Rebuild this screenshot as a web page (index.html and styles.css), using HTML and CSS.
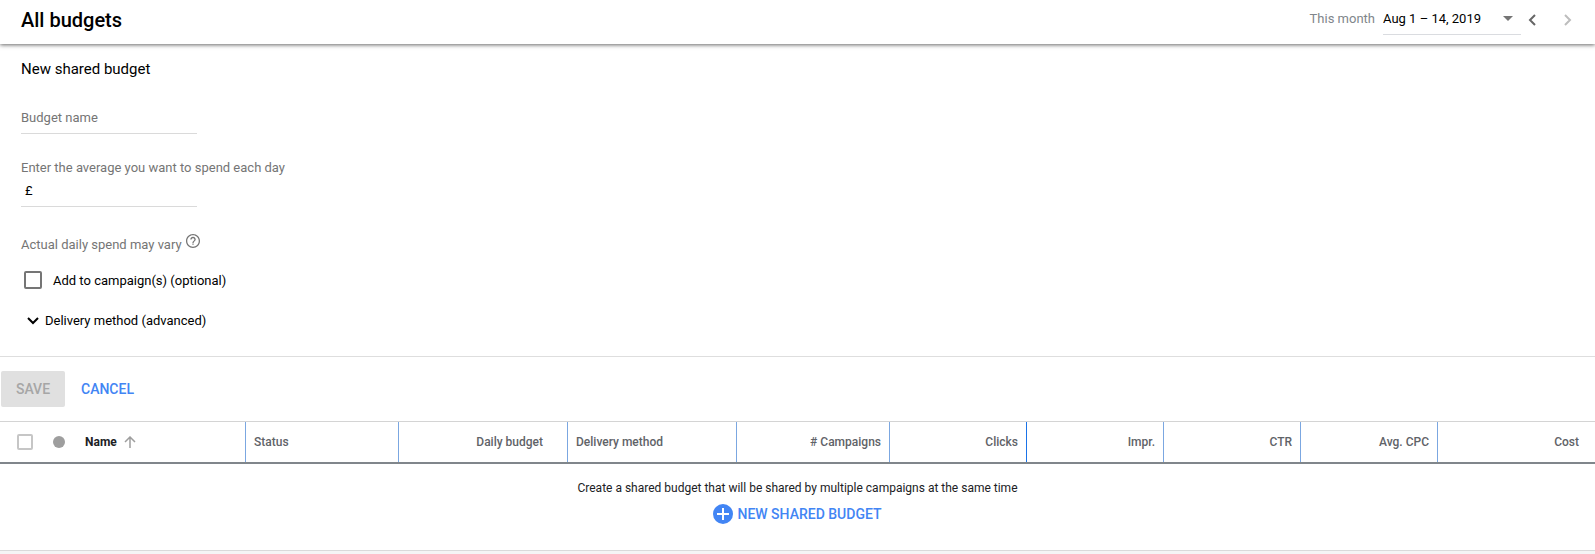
FILE: index.html
```
<!DOCTYPE html>
<html lang="en">
<head>
<meta charset="utf-8">
<meta name="viewport" content="width=device-width, initial-scale=1">
<title>All budgets</title>
<link rel="stylesheet" href="styles.css">
</head>
<body>
<header class="topbar">
  <h1 class="page-title">All budgets</h1>
  <div class="date-range">
    <label class="date-label" for="range">This month</label>
    <div class="select-wrap">
      <select class="date-select" id="range">
        <option>Aug 1 – 14, 2019</option>
      </select>
      <svg class="caret" width="10" height="5" viewBox="0 0 10 5" aria-hidden="true"><path d="M0 0h10L5 5z"/></svg>
    </div>
    <button class="step step-prev" type="button" aria-label="Previous period">
      <svg width="8" height="12" viewBox="0 0 8 12" aria-hidden="true"><path d="M7 1L2 6l5 5"/></svg>
    </button>
    <button class="step step-next" type="button" aria-label="Next period" disabled>
      <svg width="8" height="12" viewBox="0 0 8 12" aria-hidden="true"><path d="M1 1l5 5-5 5"/></svg>
    </button>
  </div>
</header>

<main>
  <form class="budget-form">
    <div class="form-body">
      <h2 class="form-title">New shared budget</h2>
      <input class="field name-field" type="text" placeholder="Budget name" aria-label="Budget name">
      <label class="field-label" for="amount">Enter the average you want to spend each day</label>
      <div class="field amount-field">
        <span>£</span>
        <input class="amount-input" id="amount" type="text" inputmode="decimal">
      </div>
      <div class="note">
        <span>Actual daily spend may vary</span>
        <svg class="help" width="14" height="14" viewBox="1 1 22 22" aria-hidden="true"><path d="M11 18h2v-2h-2v2zm1-17C5.900 1 1 5.900 1 12s4.900 11 11 11 11-4.900 11-11S18.100 1 12 1zm0 20c-5 0-9-4-9-9s4-9 9-9 9 4 9 9-4 9-9 9zm0-15.500c-2.400 0-4.300 1.900-4.300 4.300h2c0-1.300 1-2.300 2.300-2.300s2.300 1 2.300 2.300c0 2.200-3.300 2-3.300 5.200h2c0-2.300 3.300-2.500 3.300-5.200 0-2.400-1.900-4.300-4.300-4.300z"/></svg>
      </div>
      <label class="check-row">
        <input class="checkbox" type="checkbox">
        <span>Add to campaign(s) (optional)</span>
      </label>
      <button class="disclosure" type="button" aria-expanded="false">
        <svg width="12" height="8" viewBox="0 0 12 8" aria-hidden="true"><path d="M1 1l5 5 5-5"/></svg>
        <span>Delivery method (advanced)</span>
      </button>
    </div>
    <div class="actions">
      <button class="btn btn-save" type="submit" disabled>SAVE</button>
      <button class="btn btn-cancel" type="button">CANCEL</button>
    </div>
  </form>

  <table class="budgets">
    <colgroup>
      <col class="col-check"><col class="col-dot"><col class="col-name">
      <col class="col-medium"><col class="col-wide"><col class="col-wide"><col class="col-medium">
      <col class="col-metric"><col class="col-metric"><col class="col-metric"><col class="col-metric">
      <col class="col-cost">
    </colgroup>
    <thead>
      <tr>
        <th class="cell-check"><input class="checkbox checkbox-small" type="checkbox" aria-label="Select all budgets"></th>
        <th class="cell-dot"><span class="dot"></span></th>
        <th class="cell-name line">
          <span class="name-sort">Name
            <svg width="12" height="12" viewBox="0 0 12 12" aria-hidden="true"><path d="M6 12V1.500M1 6l5-5 5 5"/></svg>
          </span>
        </th>
        <th class="line">Status</th>
        <th class="num num-wide line">Daily budget</th>
        <th class="line">Delivery method</th>
        <th class="num line"># Campaigns</th>
        <th class="num line line-active">Clicks</th>
        <th class="num line">Impr.</th>
        <th class="num line">CTR</th>
        <th class="num line">Avg. CPC</th>
        <th class="num cell-cost">Cost</th>
      </tr>
    </thead>
    <tbody>
      <tr>
        <td class="empty" colspan="12">
          <p class="empty-text">Create a shared budget that will be shared by multiple campaigns at the same time</p>
          <button class="new-budget" type="button">
            <svg width="20" height="20" viewBox="0 0 20 20" aria-hidden="true"><circle cx="10" cy="10" r="10"/><path d="M10 4v12M4 10h12"/></svg>
            <span>NEW SHARED BUDGET</span>
          </button>
        </td>
      </tr>
    </tbody>
  </table>
</main>
</body>
</html>
```
FILE: styles.css
```
* { box-sizing: border-box; }

html { background: #f5f5f5; }

body {
  margin: 0;
  font-family: Roboto, "Liberation Sans", sans-serif;
  font-size: 13px;
  line-height: 20px;
  color: #000;
}

button, input, select {
  font: inherit;
  color: inherit;
  background: none;
  border: 0;
  margin: 0;
  padding: 0;
}

button { cursor: pointer; }
button:disabled { cursor: default; }

/* Top bar */
.topbar {
  position: relative;
  display: flex;
  align-items: flex-start;
  justify-content: space-between;
  height: 44px;
  padding: 0 16px 0 21px;
  background: #fff;
  box-shadow: 0 1px 4px rgba(0, 0, 0, 0.6);
}

.page-title {
  margin: 8px 0 0;
  font-size: 20px;
  font-weight: 500;
  line-height: 24px;
}

.date-range { display: flex; align-items: flex-start; }

.date-label {
  margin: 9px 8px 0 0;
  color: #80868b;
}

.select-wrap {
  display: flex;
  align-items: center;
  width: 138px;
  height: 35px;
  padding: 3px 8px 0 0;
  border-bottom: 1px solid #dadce0;
}

.date-select {
  flex: 1;
  height: 28px;
  appearance: none;
}

.caret { fill: #757575; pointer-events: none; }

.step {
  display: flex;
  padding: 14px 7px 6px;
}

.step-next { margin-left: 14px; }

.step path {
  fill: none;
  stroke: #666;
  stroke-width: 2;
}

.step-next path { stroke: #bdbdbd; }

/* Form */
.budget-form, .budgets { background: #fff; }

.form-body {
  display: flex;
  flex-direction: column;
  align-items: flex-start;
  padding: 15px 21px 25px;
  border-bottom: 1px solid #dedede;
}

.form-title {
  margin: 0 0 24px;
  font-size: 15px;
  font-weight: 400;
}

.field {
  width: 176px;
  height: 31px;
  border-bottom: 1px solid #dadada;
}

.name-field { padding-bottom: 2px; }
.name-field::placeholder { color: #757575; opacity: 1; }

.field-label {
  margin-top: 24px;
  color: #757575;
}

.amount-field {
  display: flex;
  align-items: center;
  gap: 4px;
  height: 29px;
  padding: 0 4px 2px;
}

.amount-input { flex: 1; min-width: 0; }

.note {
  display: flex;
  align-items: flex-start;
  gap: 4px;
  margin-top: 27px;
  color: #757575;
  line-height: 22px;
}

.help { fill: #757575; }

.check-row {
  display: flex;
  align-items: flex-start;
  gap: 11px;
  margin-top: 15px;
  padding-left: 3px;
}

.checkbox {
  appearance: none;
  width: 18px;
  height: 18px;
  border: 2px solid #757575;
  border-radius: 2px;
}

.checkbox-small {
  display: block;
  width: 16px;
  height: 16px;
  border-color: #c6c6c6;
}

.disclosure {
  display: flex;
  align-items: center;
  gap: 6px;
  margin-top: 20px;
  padding-left: 6px;
}

.disclosure path {
  fill: none;
  stroke: #000;
  stroke-width: 2;
}

.actions {
  display: flex;
  gap: 4px;
  padding: 14px 1px;
}

.btn {
  height: 36px;
  padding: 0 12px;
  border-radius: 2px;
  font-size: 14px;
  font-weight: 500;
}

.btn-save {
  min-width: 64px;
  color: #a6a6a6;
  background: #e0e0e0;
}

.btn-cancel { color: #4285f4; }

/* Table: columns share any extra width in proportion */
.budgets {
  width: 100%;
  table-layout: fixed;
  border-collapse: separate;
  border-spacing: 0;
  font-size: 12px;
}

.col-check { width: 45px; }
.col-dot { width: 28px; }
.col-name { width: 173px; }
.col-medium { width: 153px; }
.col-wide { width: 169px; }
.col-metric { width: 137px; }
.col-cost { width: 157px; }

.budgets th {
  height: 43px;
  padding: 0 8px;
  border-top: 1px solid #d4d4d4;
  border-bottom: 2px solid #80868b;
  color: #5f6368;
  font-weight: 500;
  text-align: left;
  white-space: nowrap;
}

.budgets .line {
  background: linear-gradient(#7ba7e1, #7ba7e1) right / 1px 100% no-repeat;
}

.budgets .line-active {
  background-image: linear-gradient(#1a73e8, #1a73e8);
}

.budgets .num { text-align: right; padding-right: 9px; }
.budgets .num-wide { padding-right: 25px; }
.budgets .cell-cost { padding-right: 16px; }
.budgets .cell-check { padding: 0 0 0 17px; }

.budgets .cell-name {
  padding-left: 12px;
  color: #202124;
  font-weight: 700;
}

.name-sort { display: flex; align-items: center; gap: 7px; }

.name-sort path {
  fill: none;
  stroke: #9e9e9e;
  stroke-width: 1.500;
}

.dot {
  display: block;
  width: 12px;
  height: 12px;
  border-radius: 50%;
  background: #9e9e9e;
}

.empty {
  padding: 14px 8px 26px;
  border-bottom: 1px solid #dadada;
  text-align: center;
}

.empty-text { margin: 0 0 6px; color: #202124; }

.new-budget {
  display: inline-flex;
  align-items: center;
  gap: 4px;
  color: #4285f4;
  font-size: 14px;
  font-weight: 500;
  vertical-align: top;
}

.new-budget circle { fill: #4285f4; }
.new-budget path { stroke: #fff; stroke-width: 2; }
```
